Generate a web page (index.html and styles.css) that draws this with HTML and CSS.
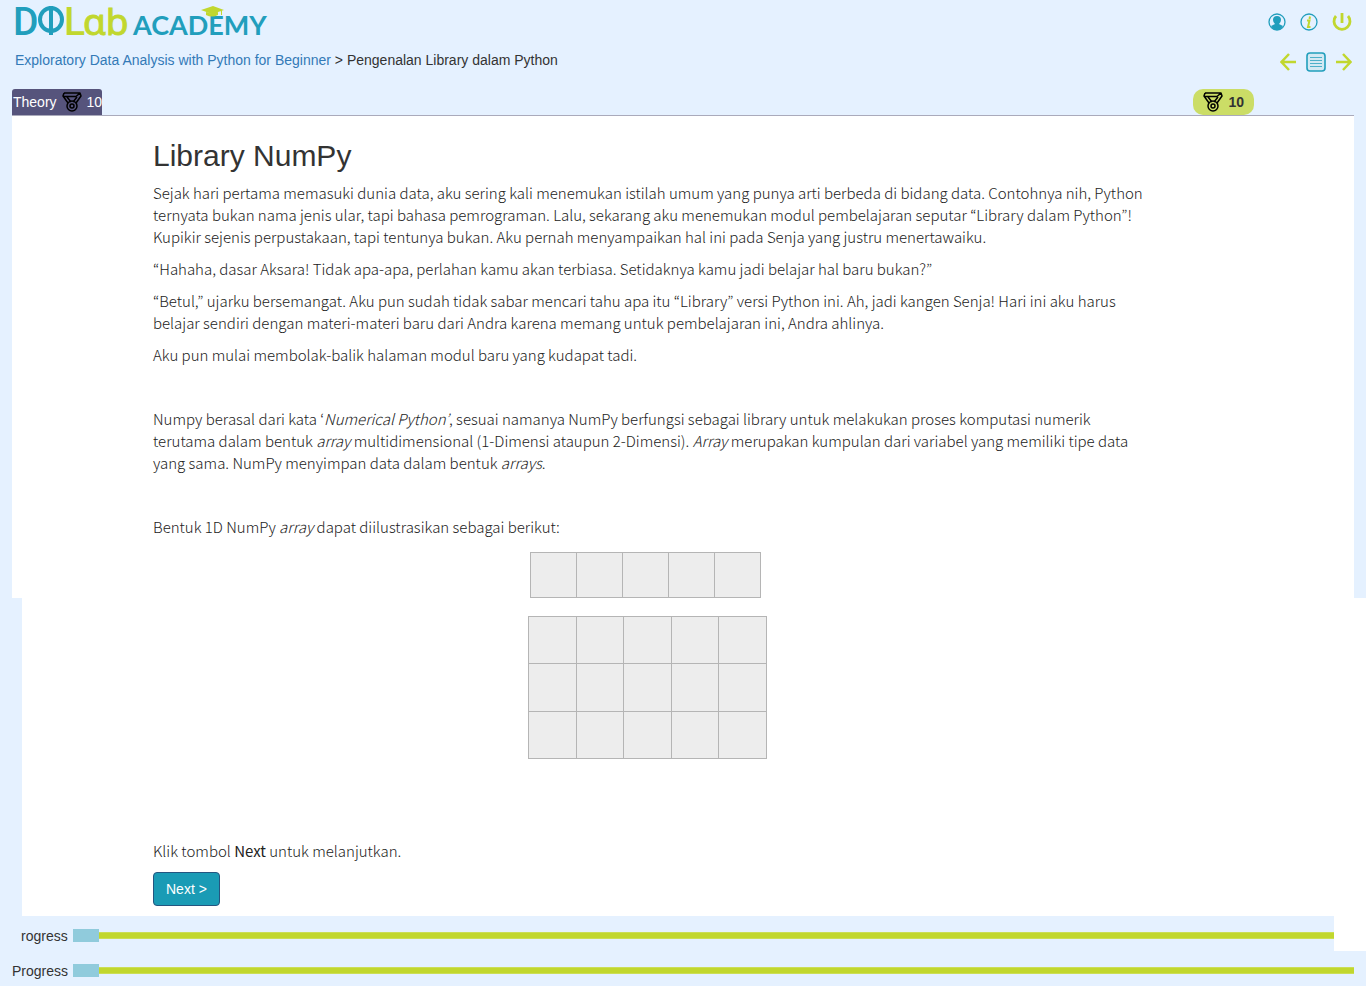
FILE: index.html
```html
<!DOCTYPE html>
<html lang="id">
<head>
<meta charset="utf-8">
<title>Library NumPy</title>
<link rel="stylesheet" href="styles.css">
</head>
<body>
<svg class="defs" aria-hidden="true">
  <symbol id="medal" viewBox="0 0 20 20">
    <g fill="none" stroke="#000" stroke-width="1.5" stroke-linejoin="round">
      <path d="M2 1h16l1 3-5 7M2 1L1 4l5 7M1 4.500h13l4-3.500M5 5l4 5M15 5l-4 5"/>
      <circle cx="10" cy="14" r="5"/>
      <circle cx="10" cy="14" r="2"/>
    </g>
  </symbol>
</svg>
<header class="top">
  <a class="logo" href="#">
    <svg width="260" height="42" viewBox="0 0 260 42" role="img" aria-label="DQLab Academy">
      <g class="logo-big">
        <text class="teal" x="0" y="34">D</text>
        <text class="lime" x="51" y="34">L</text>
        <text class="lime round" x="70" y="34">ɑb</text>
      </g>
      <g fill="none" stroke="#219ebc" stroke-width="4"><ellipse cx="38" cy="18.500" rx="11" ry="11.500"/><path d="M38 5v29"/></g>
      <text class="logo-small teal" x="120" y="34">ACADEMY</text>
      <path fill="#c1d72e" d="M188 9l12-4 11 4-12 4zM193 11v3q6 3 12 0v-3l-6 2zM208 9h1v5h-1z"/>
    </svg>
  </a>
  <nav class="icons">
    <a href="#" aria-label="Profil"><svg width="18" height="18" viewBox="0 0 18 18"><circle cx="9" cy="9" r="8" fill="none" stroke="#219ebc" stroke-width="1.300"/><path fill="#219ebc" d="M9 3q4 0 4 4 0 2-2 4l4 2q-2 4-6 4t-6-4l4-2q-2-2-2-4 0-4 4-4z"/></svg></a>
    <a href="#" aria-label="Info"><svg width="18" height="18" viewBox="0 0 18 18"><circle cx="9" cy="9" r="8" fill="none" stroke="#219ebc" stroke-width="1.300"/><path fill="none" stroke="#c1d72e" stroke-width="2" d="M7 7.500h2.500L8 14h2.500M10 3.500l-.5 2.500"/></svg></a>
    <a href="#" aria-label="Keluar"><svg width="20" height="20" viewBox="0 0 20 20"><path fill="none" stroke="#c1d72e" stroke-width="2.800" d="M10 1v10M4 4a8 8 0 1 0 12 0"/></svg></a>
  </nav>
</header>
<div class="crumbs">
  <div class="trail"><a href="#">Exploratory Data Analysis with Python for Beginner</a> &gt; Pengenalan Library dalam Python</div>
  <nav class="pager">
    <a href="#" aria-label="Sebelumnya"><svg width="16" height="18" viewBox="0 0 16 18"><path fill="none" stroke="#c1d72e" stroke-width="2.500" d="M16 9H2M9 1L1.500 9 9 17"/></svg></a>
    <a href="#" aria-label="Daftar"><svg width="20" height="20" viewBox="0 0 20 20"><rect x="1" y="1" width="18" height="18" rx="3" fill="#d3e9f3" stroke="#219ebc" stroke-width="1.600"/><path stroke="#4db0c9" stroke-width="1.200" d="M4 5.500h12M4 8.500h12M4 11.500h12M4 14.500h12"/></svg></a>
    <a href="#" aria-label="Berikutnya"><svg width="16" height="18" viewBox="0 0 16 18"><path fill="none" stroke="#c1d72e" stroke-width="2.500" d="M0 9h14M7 1l7.500 8L7 17"/></svg></a>
  </nav>
</div>
<div class="tabs">
  <span class="tab">Theory <svg class="medal"><use href="#medal"/></svg> 10</span>
  <span class="score"><svg class="medal"><use href="#medal"/></svg> 10</span>
</div>
<main>
  <section class="panel first">
    <h1>Library NumPy</h1>
    <p>Sejak hari pertama memasuki dunia data, aku sering kali menemukan istilah umum yang punya arti berbeda di bidang data. Contohnya nih, Python<br>ternyata bukan nama jenis ular, tapi bahasa pemrograman. Lalu, sekarang aku menemukan modul pembelajaran seputar “Library dalam Python”!<br>Kupikir sejenis perpustakaan, tapi tentunya bukan. Aku pernah menyampaikan hal ini pada Senja yang justru menertawaiku.</p>
    <p>“Hahaha, dasar Aksara! Tidak apa-apa, perlahan kamu akan terbiasa. Setidaknya kamu jadi belajar hal baru bukan?”</p>
    <p>“Betul,” ujarku bersemangat. Aku pun sudah tidak sabar mencari tahu apa itu “Library” versi Python ini. Ah, jadi kangen Senja! Hari ini aku harus<br>belajar sendiri dengan materi-materi baru dari Andra karena memang untuk pembelajaran ini, Andra ahlinya.</p>
    <p class="spaced">Aku pun mulai membolak-balik halaman modul baru yang kudapat tadi.</p>
    <p class="spaced">Numpy berasal dari kata ‘<em>Numerical Python’</em>, sesuai namanya NumPy berfungsi sebagai library untuk melakukan proses komputasi numerik<br>terutama dalam bentuk <em>array</em> multidimensional (1-Dimensi ataupun 2-Dimensi). <em>Array</em> merupakan kumpulan dari variabel yang memiliki tipe data<br>yang sama. NumPy menyimpan data dalam bentuk <em>arrays</em>.</p>
    <p>Bentuk 1D NumPy <em>array</em> dapat diilustrasikan sebagai berikut:</p>
    <div class="grid row"><i></i><i></i><i></i><i></i><i></i></div>
  </section>
  <section class="panel second">
    <div class="grid matrix"><i></i><i></i><i></i><i></i><i></i><i></i><i></i><i></i><i></i><i></i><i></i><i></i><i></i><i></i><i></i></div>
    <p>Klik tombol <b>Next</b> untuk melanjutkan.</p>
    <button class="next" type="button">Next &gt;</button>
  </section>
</main>
<footer>
  <div class="progress inset"><span class="label">rogress</span><span class="done"></span><span class="line"></span></div>
  <div class="progress"><span class="label">Progress</span><span class="done"></span><span class="line"></span></div>
</footer>
</body>
</html>
```
FILE: styles.css
```css
* { box-sizing: border-box; }
body { margin: 0; background: #e5f1ff; color: #333; font: 14px/20px "Liberation Sans", Arial, sans-serif; }
a { color: #337ab7; text-decoration: none; }
svg { display: block; }
.defs { position: absolute; width: 0; height: 0; }
.top { display: flex; justify-content: space-between; align-items: center; height: 43px; padding: 0 14px 0 13px; }
.icons { display: flex; align-items: center; gap: 14px; }
.logo-big { font: 500 39px/1 Roboto, sans-serif; }
.logo-big .round { font: 400 37px/1 "Noto Sans", sans-serif; stroke: #c1d72e; stroke-width: 1; }
.logo-small { font: 700 27px/1 Lato, sans-serif; }
.teal { fill: #219ebc; }
.lime { fill: #c1d72e; }
.crumbs { display: flex; justify-content: space-between; align-items: center; height: 38px; padding: 0 14px 0 15px; }
.trail { padding-bottom: 4px; }
.pager { display: flex; align-items: center; gap: 10px; }
.tabs { display: flex; justify-content: space-between; align-items: flex-end; height: 35px; margin: 0 12px; border-bottom: 1px solid #aab; }
.tab, .score { display: flex; align-items: center; gap: 5px; height: 26px; }
.tab { padding-left: 1px; background: #56547c; color: #fff; border-radius: 3px 3px 0 0; }
.score { margin-right: 100px; padding: 0 10px; background: #cbdd66; border-radius: 10px; font-weight: bold; }
.medal { width: 20px; height: 20px; }
.panel { background: #fff; color: #222; font: 300 15px/22px "Noto Sans CJK KR", sans-serif; }
.first { margin: 0 12px; padding: 22px 141px 0; }
h1 { margin: 0 0 9px; color: #333; font: 500 30px/35px "Liberation Sans", Arial, sans-serif; }
p { margin: 0 0 10px; white-space: nowrap; }
.spaced { margin-bottom: 42px; }
.grid { display: grid; grid-template-columns: repeat(5, 1fr); border: solid #b5b5b5; border-width: 1px 0 0 1px; }
.grid i { background: #ededed; border: solid #b5b5b5; border-width: 0 1px 1px 0; }
.row { width: 231px; height: 46px; margin: 14px 0 0 377px; }
.second { margin-left: 22px; padding: 18px 131px 10px; }
.matrix { width: 239px; height: 143px; margin: 0 0 81px 375px; }
.next { display: block; height: 34px; padding: 0 12px; border: 1px solid #245580; border-radius: 4px; background: #1a9bb5; color: #fff; font: 14px "Liberation Sans", Arial, sans-serif; }
.progress { display: flex; align-items: center; height: 35px; padding: 4px 12px 0; }
.inset { padding: 4px 0 0 21px; border-right: 32px solid #fff; }
.label { margin-right: 5px; }
.done { width: 26px; height: 13px; background: #90cbdc; }
.line { flex: 1; height: 7px; background: #c1d72e; border: solid #cbde55; border-width: 1px 0; }
```
